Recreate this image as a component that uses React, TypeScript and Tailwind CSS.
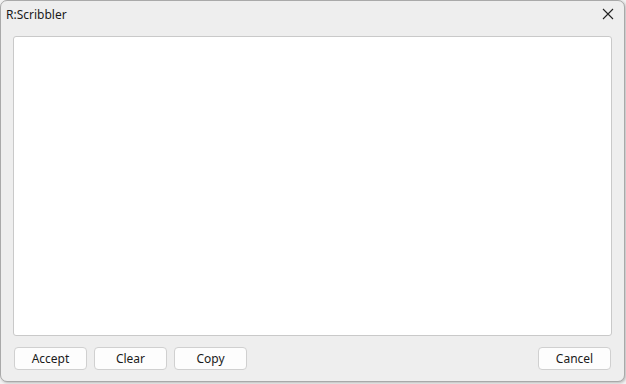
export default function App() {
  const btn =
    "h-[23px] w-[73px] rounded-[4px] border border-[#d0d0d0] bg-[#fdfdfd] text-[12px] text-[#1a1a1a] flex items-center justify-center leading-none";
  return (
    <div className="w-[626px] h-[384px] bg-[#f3f3f3]" style={{ fontFamily: '"Noto Sans", "Open Sans", sans-serif' }}>
      <div className="w-[625px] h-[382px] rounded-[7px] border border-[#a9a9a9] bg-[#eeeeee] flex flex-col shadow-[1px_1px_3px_rgba(0,0,0,0.25)]">
        <div className="h-[28px] flex items-center justify-between pl-[5px] pr-[10px]">
          <span className="text-[12px] text-[#1a1a1a]">R:Scribbler</span>
          <svg width="12" height="12" viewBox="0 0 12 12" className="mt-[-2px]">
            <path d="M1 1 L11 11 M11 1 L1 11" stroke="#222" strokeWidth="1.1" />
          </svg>
        </div>
        <div className="px-[12px] pt-[7px]">
          <div className="h-[300px] rounded-[3px] border border-[#c9c9c9] bg-white" />
        </div>
        <div className="flex items-center justify-between px-[13px] pt-[11px]">
          <div className="flex gap-[7px]">
            <button className={btn}>Accept</button>
            <button className={btn}>Clear</button>
            <button className={btn}>Copy</button>
          </div>
          <button className={btn}>Cancel</button>
        </div>
      </div>
    </div>
  );
}
